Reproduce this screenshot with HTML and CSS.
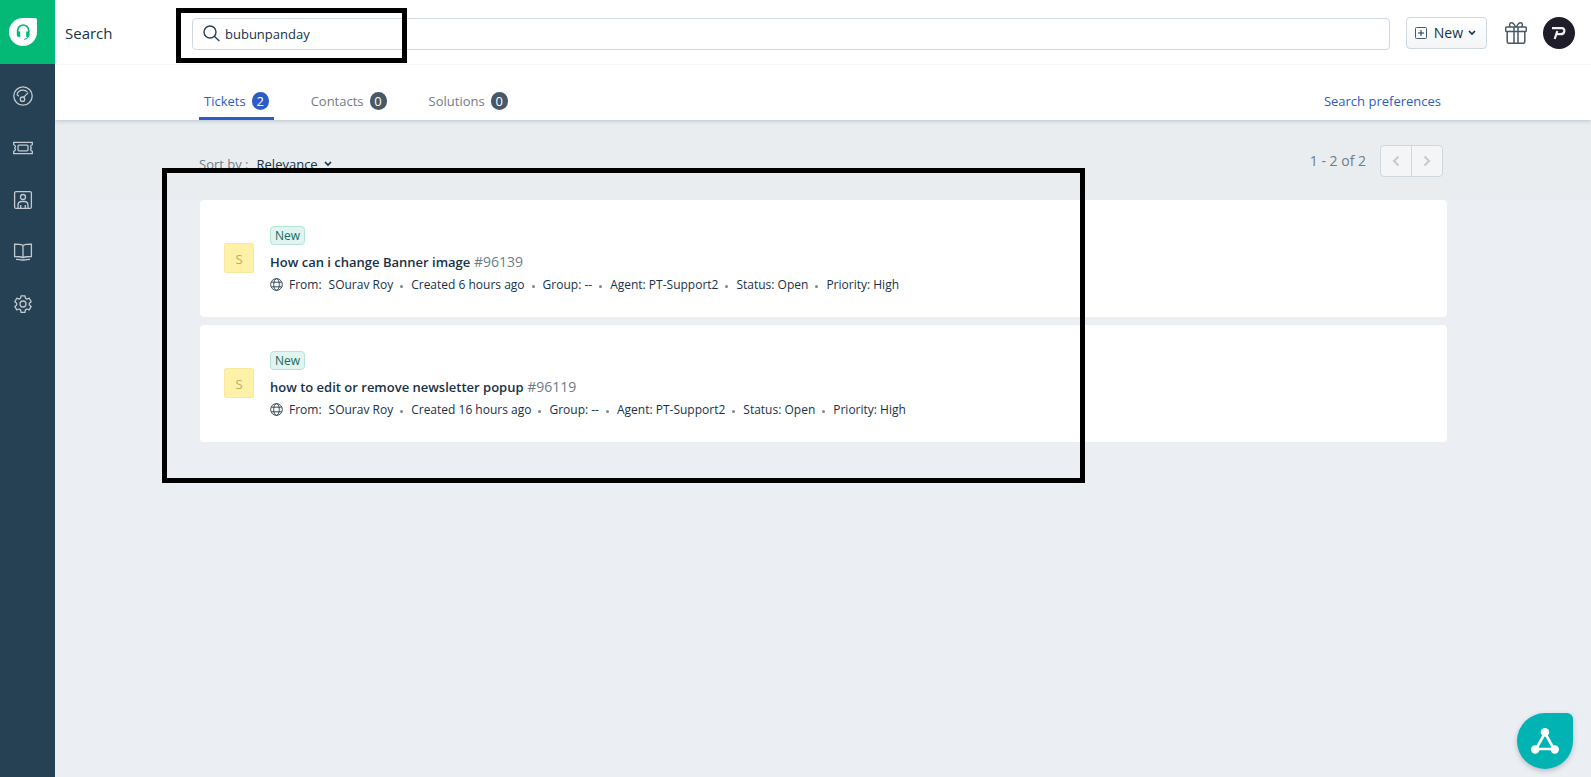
FILE: index.html
```html
<!DOCTYPE html>
<html lang="en">
<head>
<meta charset="utf-8">
<meta name="viewport" content="width=device-width, initial-scale=1">
<title>Search</title>
<link rel="stylesheet" href="styles.css">
</head>
<body>
<svg class="defs" aria-hidden="true">
  <symbol id="globe" viewBox="0 0 14 14"><g fill="none" stroke="currentColor"><circle cx="7" cy="7" r="6.300"/><ellipse cx="7" cy="7" rx="3" ry="6.300"/><path d="M1.500 4.500h11M1.500 9.500h11"/></g></symbol>
  <symbol id="chevron" viewBox="0 0 8 6"><path d="M1 1l3 3 3-3" fill="none" stroke="currentColor" stroke-width="1.700"/></symbol>
</svg>
<div class="app">
  <aside class="sidebar">
    <a class="brand" href="#" aria-label="Home">
      <svg width="28" height="28" viewBox="0 0 28 28"><path d="M14 0h12a2 2 0 0 1 2 2v12A14 14 0 1 1 14 0z" fill="#fff"/><g fill="none" stroke="#04b875"><path d="M8.700 14v-1.500a5.500 5.500 0 0 1 11 0V14" stroke-width="1.700"/><path d="M19.500 17c0 2.500-1.500 4.200-4.500 4.300" stroke-width="1"/></g><path d="M7.800 13.500h3.400v5.500h-1.400a2 2 0 0 1-2-2zM17.200 13.500h3.400V17a2 2 0 0 1-2 2h-1.400z" fill="#04b875"/></svg>
    </a>
    <nav class="menu" aria-label="Main">
      <a href="#" aria-label="Dashboard"><svg viewBox="0 0 20 20"><circle cx="10" cy="10" r="9.200"/><path d="M4 8.800C4.700 5.800 7 4.200 10 4.200c1.800 0 3.200.6 4.300 1.700M10.600 11.400l4.600-4.800M4 8.800l2 1.400"/><circle cx="9.500" cy="13.200" r="2.200"/></svg></a>
      <a href="#" aria-label="Tickets"><svg viewBox="0 0 20 20"><path d="M.7 4.300h18.600v2.400c-1.300.5-1.700 1.200-1.700 1.900 0 .6.700.9.700 1.400s-.7.800-.7 1.400c0 .7.400 1.400 1.700 1.900v2.400H.7v-2.400c1.300-.5 1.700-1.200 1.700-1.900 0-.6-.7-.9-.7-1.400s.7-.8.700-1.400c0-.7-.4-1.400-1.700-1.900z"/><rect x="5" y="7.200" width="10" height="5.600" rx="1"/></svg></a>
      <a href="#" aria-label="Contacts"><svg viewBox="0 0 20 20"><rect x="1.600" y="1.600" width="16.800" height="16.800" rx="1.500"/><circle cx="10" cy="7" r="2.500"/><path d="M5 18v-2.500c0-2.500 1.500-4 3.500-4h3c2 0 3.500 1.500 3.500 4V18M7.700 15v3M12.300 15v3"/></svg></a>
      <a href="#" aria-label="Solutions"><svg viewBox="0 0 20 20"><path d="M10 3.500c-2-1.200-4.500-1.300-8.400-1.300v12.300c4 0 6.400.1 8.400 1.300 2-1.200 4.400-1.300 8.400-1.300V2.200c-3.900 0-6.400.1-8.400 1.300zM10 3.500v12M3 17.300c3 0 4.500 0 5.500.7h3c1-.7 2.500-.7 5.500-.7"/></svg></a>
      <a href="#" aria-label="Settings"><svg viewBox="0 0 20 20"><circle cx="10" cy="10" r="3"/><path d="M8 1.800h4l.4 2.400 1.500.9 2.300-.9 2 3.500-1.900 1.500v1.700l1.900 1.500-2 3.500-2.300-.9-1.500.9-.4 2.400H8l-.4-2.400-1.500-.9-2.300.9-2-3.500 1.900-1.500V9.200L1.800 7.700l2-3.500 2.300.9 1.500-.9z" stroke-linejoin="round"/></svg></a>
    </nav>
  </aside>
  <div class="page">
    <header class="header">
      <div class="topbar">
        <h1 class="title">Search</h1>
        <label class="search">
          <svg width="17" height="17" viewBox="0 0 17 17" fill="none" stroke="#264050" stroke-width="1.400"><circle cx="7" cy="7" r="6"/><path d="M11.300 11.300l5 4.700"/></svg>
          <input type="search" aria-label="Search" value="bubunpanday">
        </label>
        <button class="new" type="button">
          <svg width="12" height="12" viewBox="0 0 12 12" fill="none" stroke="#475867"><rect x=".5" y=".5" width="11" height="11" rx="1"/><path d="M6 3v6M3 6h6" stroke="#183247"/></svg>
          <span>New</span>
          <svg class="chevron"><use href="#chevron"/></svg>
        </button>
        <button class="gift" type="button" aria-label="What's new">
          <svg width="22" height="22" viewBox="0 0 22 22" fill="none" stroke="#475867" stroke-width="1.500"><rect x=".7" y="5" width="20.600" height="4.600" rx="1.200"/><path d="M2.200 9.600v10a1.700 1.700 0 0 0 1.700 1.700h14.200a1.700 1.700 0 0 0 1.700-1.700v-10M9 5v16M13 5v16M10.500 5C9.500 2.500 8 .8 6.300.8 4.500.8 4 3.500 5.500 5M11.500 5c1-2.500 2.500-4.200 4.200-4.200 1.800 0 2.300 2.700.8 4.200"/></svg>
        </button>
        <button class="avatar" type="button" aria-label="Profile">
          <svg width="32" height="32" viewBox="0 0 32 32"><circle cx="16" cy="16" r="16" fill="#1f1d29"/><path d="M9 11.200h9.800c4 0 3.200 6-1.200 6h-4.800M14.300 14l-2.600 8" fill="none" stroke="#f3f1ec" stroke-width="2.200"/></svg>
        </button>
      </div>
      <div class="tabbar">
        <nav class="tabs" aria-label="Results">
          <a class="tab active" href="#">Tickets <span class="count">2</span></a>
          <a class="tab" href="#">Contacts <span class="count">0</span></a>
          <a class="tab" href="#">Solutions <span class="count">0</span></a>
        </nav>
        <a class="prefs" href="#">Search preferences</a>
      </div>
    </header>
    <main class="content">
      <div class="toolbar">
        <div class="sort">
          <label for="sort">Sort by :</label>
          <select id="sort"><option>Relevance</option></select>
          <svg class="chevron"><use href="#chevron"/></svg>
        </div>
        <div class="pager">
          <span>1 - 2 of 2</span>
          <div class="pages">
            <button type="button" aria-label="Previous"><svg width="8" height="12" viewBox="0 0 8 12"><path d="M6.500 1.500L2 6l4.500 4.500"/></svg></button>
            <button type="button" aria-label="Next"><svg width="8" height="12" viewBox="0 0 8 12"><path d="M1.500 1.500L6 6l-4.500 4.500"/></svg></button>
          </div>
        </div>
      </div>
      <article class="card">
        <div class="initial">S</div>
        <div class="ticket">
          <span class="badge">New</span>
          <h2 class="subject"><a href="#">How can i change Banner image</a> <span>#96139</span></h2>
          <ul class="meta">
            <li><svg class="globe"><use href="#globe"/></svg><span>From:</span><span>SOurav Roy</span></li>
            <li>Created 6 hours ago</li>
            <li>Group: --</li>
            <li>Agent: PT-Support2</li>
            <li>Status: Open</li>
            <li>Priority: High</li>
          </ul>
        </div>
      </article>
      <article class="card">
        <div class="initial">S</div>
        <div class="ticket">
          <span class="badge">New</span>
          <h2 class="subject"><a href="#">how to edit or remove newsletter popup</a> <span>#96119</span></h2>
          <ul class="meta">
            <li><svg class="globe"><use href="#globe"/></svg><span>From:</span><span>SOurav Roy</span></li>
            <li>Created 16 hours ago</li>
            <li>Group: --</li>
            <li>Agent: PT-Support2</li>
            <li>Status: Open</li>
            <li>Priority: High</li>
          </ul>
        </div>
      </article>
    </main>
  </div>
</div>
<div class="mark mark-search"></div>
<div class="mark mark-results"></div>
<button class="launcher" type="button" aria-label="Switch product">
  <svg width="28" height="26" viewBox="0 0 28 26"><path d="M14 5L5 21h18z" fill="none" stroke="#fff" stroke-width="2.600"/><g fill="#fff"><circle cx="14" cy="4.300" r="4.200"/><circle cx="4.200" cy="21.500" r="4.200"/><circle cx="23.800" cy="21.500" r="4.200"/></g></svg>
</button>
</body>
</html>
```
FILE: styles.css
```css
* { box-sizing: border-box; }

body {
  margin: 0;
  background: #ebeef3;
  color: #183247;
  font: 13px/20px "Open Sans", "Noto Sans", sans-serif;
}

button, input, select { font: inherit; color: inherit; }
button { cursor: pointer; }
a { color: inherit; text-decoration: none; }
.defs { position: absolute; width: 0; height: 0; }

.app { display: flex; min-height: 100vh; }

.sidebar {
  position: relative;
  z-index: 1;
  flex: none;
  width: 55px;
  background: #264154;
}
.brand {
  display: flex;
  align-items: center;
  height: 64px;
  padding-left: 9px;
  background: #04b875;
}
.menu {
  display: flex;
  flex-direction: column;
  gap: 32px;
  padding: 22px 13px;
}
.menu a { height: 20px; }
.menu svg {
  display: block;
  width: 20px;
  height: 20px;
  fill: none;
  stroke: #c2cad1;
  stroke-width: 1.3;
}

.page { flex: 1; min-width: 0; }

.header {
  position: relative;
  background: #fff;
  box-shadow: 0 1px 4px #b8c4d0;
}
.topbar {
  display: flex;
  align-items: center;
  height: 65px;
  padding: 2px 16px 0 10px;
  border-bottom: 1px solid #f8f8f9;
}
.title {
  flex: none;
  width: 127px;
  margin: 0;
  font-size: 15px;
  font-weight: 400;
}
.search {
  display: flex;
  flex: 1;
  align-items: center;
  gap: 5px;
  height: 32px;
  margin-top: 1px;
  padding: 0 10px;
  border: 1px solid #cfd7df;
  border-radius: 4px;
}
.search input {
  flex: 1;
  min-width: 0;
  padding: 0;
  border: 0;
  outline: 0;
  background: none;
}
.new {
  display: flex;
  align-items: center;
  height: 32px;
  margin-left: 16px;
  padding: 0 10px 0 8px;
  border: 1px solid #cfd7df;
  border-radius: 4px;
  background: linear-gradient(#fff, #f3f5f7);
  font-size: 14px;
}
.new span { margin: 0 5px 0 7px; }
.chevron { width: 8px; height: 6px; }
.gift, .avatar { display: block; padding: 0; border: 0; background: none; }
.gift { height: 22px; margin-left: 18px; }
.avatar { height: 32px; margin-left: 16px; }

.tabbar {
  display: flex;
  justify-content: space-between;
  height: 55px;
  padding: 0 150px 0 144px;
}
.tabs { display: flex; gap: 32px; }
.tab {
  display: flex;
  align-items: center;
  gap: 6px;
  padding: 24px 5px 4px;
  border-bottom: 3px solid transparent;
  color: #6f7c87;
}
.tab.active { border-color: #2c5cc5; color: #2c5cc5; }
.count {
  width: 17px;
  height: 18px;
  border-radius: 9px;
  background: #475867;
  color: #fff;
  line-height: 18px;
  text-align: center;
}
.active .count { background: #2c5cc5; }
.prefs { padding-top: 26px; color: #2c5cc5; }

.content { padding: 0 144px 0 145px; }
.toolbar {
  display: flex;
  justify-content: space-between;
  height: 80px;
  margin: 0 -144px 0 -145px;
  padding: 25px 148px 0 144px;
  background: #e9edf0;
}
.sort { display: flex; align-items: center; height: 38px; color: #6f7c87; }
.sort select {
  margin: 0 5px 0 8px;
  padding: 0;
  border: 0;
  appearance: none;
  background: none;
  color: #183247;
}
.sort .chevron { color: #183247; }
.pager {
  display: flex;
  align-items: center;
  gap: 14px;
  height: 32px;
  color: #6f7c87;
  font-size: 14px;
}
.pages {
  display: flex;
  border: 1px solid #cfd7df;
  border-radius: 4px;
  background: #f3f5f7;
}
.pages button {
  width: 30px;
  height: 30px;
  padding: 0;
  border: 0;
  background: none;
}
.pages button + button { width: 31px; border-left: 1px solid #cfd7df; }
.pages svg { display: block; margin: 0 auto; fill: none; stroke: #c8c9cb; stroke-width: 2; }

.card {
  display: flex;
  gap: 16px;
  margin-bottom: 8px;
  padding: 26px 24px 23px;
  border-radius: 4px;
  background: #fff;
}
.initial {
  flex: none;
  width: 30px;
  height: 30px;
  margin-top: 17px;
  border: 1px solid #f8e9a0;
  border-radius: 2px;
  background: #fff1a7;
  color: #b9ac70;
  line-height: 30px;
  text-align: center;
}
.badge {
  display: block;
  width: fit-content;
  padding: 0 4px;
  border: 1px solid #b4e5d8;
  border-radius: 4px;
  background: #e0f5f1;
  color: #1a6b5c;
  font-size: 12px;
  font-weight: 500;
  line-height: 17px;
}
.subject {
  margin: 7px 0 3px;
  font-size: 14px;
  font-weight: 400;
  line-height: 20px;
}
.subject a { font-size: 13px; font-weight: 600; }
.subject span { color: #6f7c87; }
.meta {
  display: flex;
  flex-wrap: wrap;
  margin: 0;
  padding: 0;
  font-size: 12px;
  line-height: 19px;
  list-style: none;
}
.meta li { display: flex; align-items: center; }
.meta li + li::before {
  width: 3px;
  height: 3px;
  margin: 3px 8px 0 7px;
  border-radius: 50%;
  background: #7d8893;
  content: "";
}
.meta li span + span { margin-left: 7px; }
.globe { width: 13px; height: 13px; margin-right: 6px; color: #264050; }

/* Highlight frames drawn over the page */
.mark { position: absolute; z-index: 2; border: 5px solid #000; pointer-events: none; }
.mark-search { top: 8px; left: 176px; width: 231px; height: 55px; }
.mark-results { top: 168px; left: 162px; width: 923px; height: 315px; }

.launcher {
  display: flex;
  position: fixed;
  right: 18px;
  bottom: 8px;
  align-items: center;
  justify-content: center;
  width: 56px;
  height: 56px;
  padding: 0;
  border: 0;
  border-radius: 28px 6px 28px 28px;
  background: #02b3b3;
  box-shadow: 0 2px 5px #b3bcc6;
}
```
